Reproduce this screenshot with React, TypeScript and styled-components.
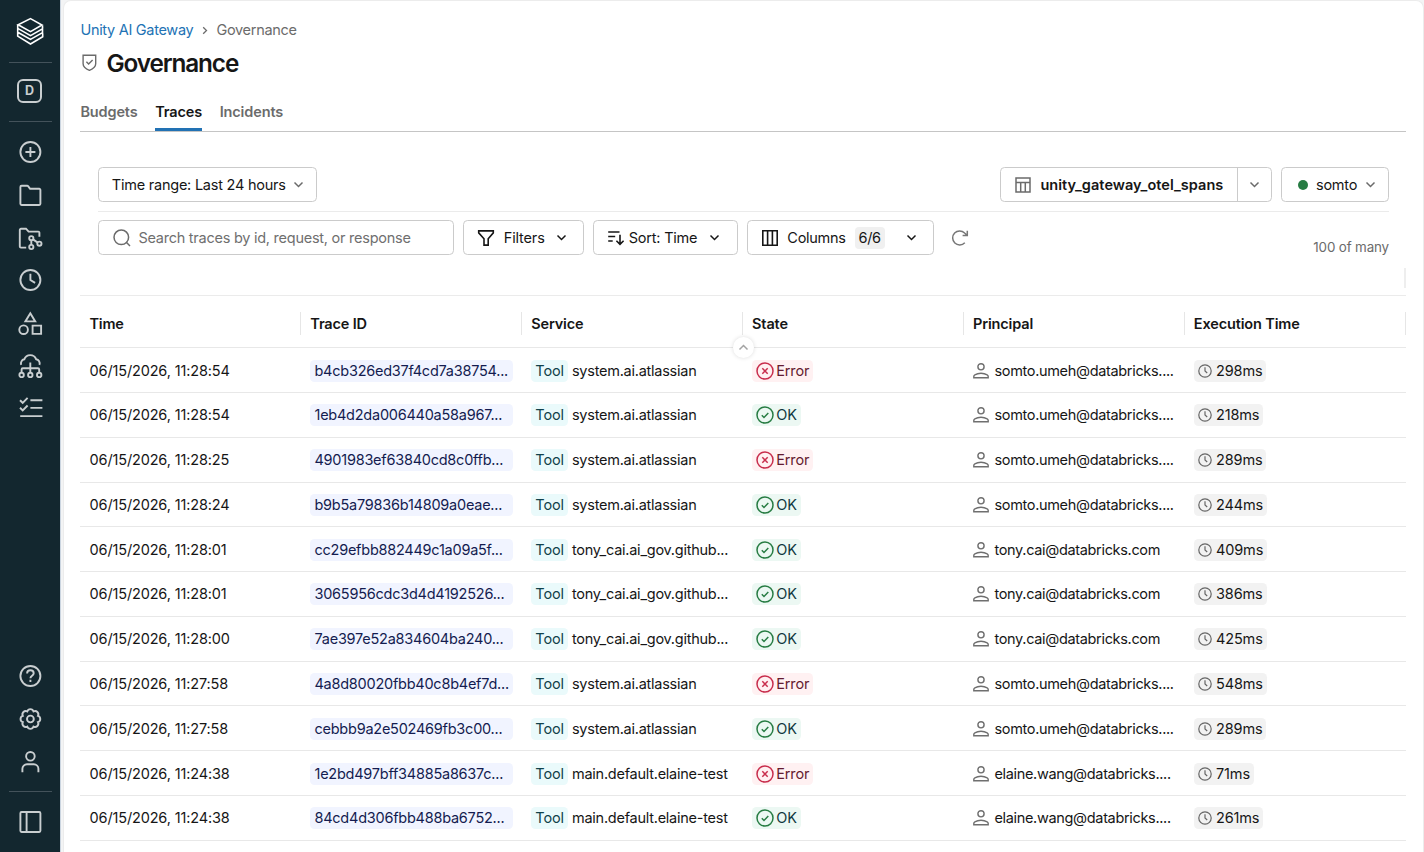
import * as React from 'react';
import styled, { createGlobalStyle } from 'styled-components';

interface Trace {
  time: string;
  id: string;
  service: string;
  ok: boolean;
  principal: string;
  duration: string;
}

const traces: Array<Trace> = [
  { time: '06/15/2026, 11:28:54', id: 'b4cb326ed37f4cd7a38754...', service: 'system.ai.atlassian', ok: false, principal: 'somto.umeh@databricks....', duration: '298ms' },
  { time: '06/15/2026, 11:28:54', id: '1eb4d2da006440a58a967...', service: 'system.ai.atlassian', ok: true, principal: 'somto.umeh@databricks....', duration: '218ms' },
  { time: '06/15/2026, 11:28:25', id: '4901983ef63840cd8c0ffb...', service: 'system.ai.atlassian', ok: false, principal: 'somto.umeh@databricks....', duration: '289ms' },
  { time: '06/15/2026, 11:28:24', id: 'b9b5a79836b14809a0eae...', service: 'system.ai.atlassian', ok: true, principal: 'somto.umeh@databricks....', duration: '244ms' },
  { time: '06/15/2026, 11:28:01', id: 'cc29efbb882449c1a09a5f...', service: 'tony_cai.ai_gov.github...', ok: true, principal: 'tony.cai@databricks.com', duration: '409ms' },
  { time: '06/15/2026, 11:28:01', id: '3065956cdc3d4d4192526...', service: 'tony_cai.ai_gov.github...', ok: true, principal: 'tony.cai@databricks.com', duration: '386ms' },
  { time: '06/15/2026, 11:28:00', id: '7ae397e52a834604ba240...', service: 'tony_cai.ai_gov.github...', ok: true, principal: 'tony.cai@databricks.com', duration: '425ms' },
  { time: '06/15/2026, 11:27:58', id: '4a8d80020fbb40c8b4ef7d...', service: 'system.ai.atlassian', ok: false, principal: 'somto.umeh@databricks....', duration: '548ms' },
  { time: '06/15/2026, 11:27:58', id: 'cebbb9a2e502469fb3c00...', service: 'system.ai.atlassian', ok: true, principal: 'somto.umeh@databricks....', duration: '289ms' },
  { time: '06/15/2026, 11:24:38', id: '1e2bd497bff34885a8637c...', service: 'main.default.elaine-test', ok: false, principal: 'elaine.wang@databricks....', duration: '71ms' },
  { time: '06/15/2026, 11:24:38', id: '84cd4d306fbb488ba6752...', service: 'main.default.elaine-test', ok: true, principal: 'elaine.wang@databricks....', duration: '261ms' },
];

const columns = ['Time', 'Trace ID', 'Service', 'State', 'Principal', 'Execution Time'];

const GlobalStyle = createGlobalStyle`
  * { box-sizing: border-box; }
  body {
    margin: 0;
    overflow: hidden;
    background: #f3f4f5;
    color: #161616;
    font-family: Inter, 'Liberation Sans', sans-serif;
    font-size: 14.5px;
    line-height: 20px;
    letter-spacing: -0.15px;
  }
  button { font: inherit; color: inherit; letter-spacing: inherit; }
  svg { display: block; flex: none; }
`;

const Layout = styled.div`
  display: flex;
  height: 852px;
`;

const Sidebar = styled.nav`
  flex: none;
  display: flex;
  flex-direction: column;
  align-items: center;
  width: 61px;
  background: #13272f;
  border-right: 1px solid #cbd5e0;
  color: #c9ced0;
`;

const SideSlot = styled.div<{ $height?: number }>`
  flex: none;
  display: flex;
  align-items: center;
  justify-content: center;
  width: 100%;
  height: ${(p) => p.$height || 42.7}px;
`;

const SideDivider = styled.div`
  flex: none;
  width: 43px;
  height: 1px;
  margin-left: 1px;
  background: #43525a;
`;

const SideSpacer = styled.div`
  flex: 1;
`;

const Workspace = styled.div`
  display: flex;
  align-items: center;
  justify-content: center;
  width: 25px;
  height: 24px;
  margin-right: 1px;
  margin-bottom: 3px;
  border: 2px solid #c9ced0;
  border-radius: 6px;
  font-size: 12.5px;
  font-weight: 700;
`;

const Page = styled.main`
  flex: 1;
  min-width: 0;
  margin: 0 0 0 2px;
  padding: 19px 17px 0 16.4px;
  background: #fff;
  border: 1px solid #ececec;
  border-bottom: none;
  border-radius: 8px 8px 0 0;
  overflow: hidden;
`;

const Breadcrumb = styled.div`
  display: flex;
  align-items: center;
  height: 20px;
  color: #6b6b6b;
  letter-spacing: -0.3px;
`;

const Crumb = styled.a`
  color: #2272b4;
`;

const CrumbArrow = styled.svg`
  margin: 1px 8px 0 9px;
`;

const TitleRow = styled.div`
  display: flex;
  align-items: center;
  gap: 9px;
  height: 32px;
  margin-top: 7px;
  padding-left: 1px;
`;

const Title = styled.h1`
  margin: 0;
  font-size: 24.3px;
  line-height: 32px;
  font-weight: 600;
  letter-spacing: -1.1px;
`;

const Tabs = styled.div`
  display: flex;
  gap: 17.6px;
  height: 40px;
  margin-top: 13px;
  border-bottom: 1px solid #c5c5c5;
`;

const Tab = styled.div<{ $active?: boolean }>`
  height: 39px;
  padding-top: 10px;
  font-weight: 600;
  letter-spacing: -0.13px;
  color: ${(p) => (p.$active ? '#161616' : '#6b6b6b')};
  border-bottom: ${(p) => (p.$active ? '3px solid #2272b4' : 'none')};
`;

const Toolbar = styled.div`
  display: flex;
  align-items: center;
  margin: 35px 17px 0 17.4px;
  padding-bottom: 9px;
  border-bottom: 1px solid #ebebeb;
`;

const FilterBar = styled.div`
  display: flex;
  align-items: flex-start;
  height: 56.6px;
  margin: 8.4px 17px 0 17.4px;
`;

const Button = styled.button<{ $width: number; $last?: boolean }>`
  flex: none;
  display: flex;
  align-items: center;
  width: ${(p) => p.$width}px;
  height: 35px;
  margin: 0 ${(p) => (p.$last ? 0 : 9)}px 0 0;
  padding: 0 0 0 13px;
  background: #fff;
  border: 1px solid #cbcbcb;
  border-radius: 4.5px;
  white-space: nowrap;
`;

const Label = styled.span<{ $left?: number; $right?: number; $spacing?: number }>`
  margin-left: ${(p) => p.$left || 0}px;
  margin-right: ${(p) => p.$right || 0}px;
  letter-spacing: ${(p) => (p.$spacing === undefined ? 'inherit' : `${p.$spacing}px`)};
`;

const TableName = styled(Label)`
  font-weight: 600;
`;

const SplitButton = styled.div`
  display: flex;
  width: 272px;
  height: 35px;
  margin: 0 9px 0 auto;
  border: 1px solid #cbcbcb;
  border-radius: 4.5px;
`;

const SplitMain = styled.div`
  flex: 1;
  display: flex;
  align-items: center;
  padding-left: 14px;
`;

const SplitArrow = styled.div`
  display: flex;
  align-items: center;
  justify-content: center;
  width: 34px;
  border-left: 1px solid #cbcbcb;
`;

const StatusDot = styled.span`
  width: 10px;
  height: 10px;
  margin: 0 8px 0 3px;
  border-radius: 50%;
  background: #277c43;
`;

const SearchField = styled.div`
  display: flex;
  align-items: center;
  width: 356.4px;
  height: 35px;
  margin-right: 8.6px;
  padding-left: 14px;
  border: 1px solid #cbcbcb;
  border-radius: 4.5px;
  color: #6f6f6f;
`;

const CountBadge = styled.span`
  margin-left: 9px;
  padding: 1px 4px;
  background: #f0f0f0;
  border-radius: 4px;
  letter-spacing: -0.4px;
`;

const Refresh = styled.div`
  margin: 9px 0 0 8px;
`;

const ResultCount = styled.div`
  margin: 17px 0 0 auto;
  color: #6b6b6b;
  font-size: 13.4px;
`;

const ScrollGutter = styled.div`
  height: 20px;
  margin-left: auto;
  margin-top: -9px;
  width: 2px;
  background: #eeeeee;
`;

const Table = styled.div`
  position: relative;
  margin-top: 7px;
  border-top: 1px solid #ebebeb;
`;

const TableRow = styled.div`
  display: grid;
  grid-template-columns: repeat(6, 220.9px);
  align-items: center;
  height: 44.78px;
  border-bottom: 1px solid #e8e8e8;
`;

const TableHead = styled(TableRow)`
  height: 52.3px;
  align-items: start;
  padding-top: 16px;
`;

const HeadCell = styled.div`
  height: 23px;
  padding: 2px 0 0 9px;
  border-right: 1px solid #e6e6e6;
  font-weight: 600;
`;

const Cell = styled.div`
  display: flex;
  align-items: center;
  min-width: 0;
  padding: 1px 0 0 9.2px;
  white-space: nowrap;
`;

const CollapseHandle = styled.div`
  position: absolute;
  left: 652.6px;
  top: 41px;
  display: flex;
  align-items: center;
  justify-content: center;
  width: 21px;
  height: 21px;
  border-radius: 50%;
  background: #fff;
  box-shadow: 0 0 4px rgba(0, 0, 0, 0.14);
`;

const tones = {
  indigo: ['#f1f4ff', '#141c50'],
  teal: ['#eafafb', '#11424b'],
  red: ['#fff1f2', '#641b30'],
  green: ['#ecf8f3', '#12383f'],
  gray: ['#f2f2f2', '#161616'],
};

const Tag = styled.span<{ $tone: keyof typeof tones; $width?: number }>`
  display: inline-flex;
  align-items: center;
  width: ${(p) => (p.$width ? `${p.$width}px` : 'auto')};
  height: 22px;
  padding: 0 4px;
  border-radius: 4.5px;
  background: ${(p) => tones[p.$tone][0]};
  color: ${(p) => tones[p.$tone][1]};
`;

const Chevron = ({ color = '#6b6b6b', up = false, size = 11 }: { color?: string; up?: boolean; size?: number }) => (
  <svg width={size} height={size} viewBox="0 0 11 11" fill="none" stroke={color} strokeWidth="1.5">
    <path d={up ? 'M1.5 7.5l4-4 4 4' : 'M1.5 3.5l4 4 4-4'} />
  </svg>
);

const SideIcon = ({ children }: { children: React.ReactNode }) => (
  <svg width="24" height="24" viewBox="-0.4 0 24 24" overflow="visible" fill="none" stroke="currentColor" strokeWidth="1.9">
    {children}
  </svg>
);

const gearPoint = (i: number) => {
  const a = ((22.5 + 45 * i) * Math.PI) / 180;
  return `${(12 + 8.2 * Math.cos(a)).toFixed(2)} ${(12 + 8.2 * Math.sin(a)).toFixed(2)}`;
};
const gearPath = `M${gearPoint(0)}` + [1, 2, 3, 4, 5, 6, 7, 8].map((i) => `A3.3 3.3 0 0 1 ${gearPoint(i)}`).join('') + 'Z';

const Logo = () => (
  <svg width="28" height="29" viewBox="-0.5 0 28 29" overflow="visible" fill="none" stroke="#fff" strokeWidth="1.6" strokeLinejoin="miter">
    <path d="M14 1.6L25.5 8 14 14.6 1.6 7.7z" />
    <path d="M1.2 7.8v3.6L14 18.7l12-6.8v3.7l-12 6.8L1.2 15.2v3.9L14 27l12.2-7.3v-3.5M1.2 11.6v3.6M26 8.6v3.2" />
  </svg>
);

const ClockIcon = () => (
  <svg width="14" height="14" viewBox="0 0 14 14" fill="none" stroke="#666" strokeWidth="1.2">
    <circle cx="7" cy="7" r="6.2" />
    <path d="M7 3.3V7l2.2 2" />
  </svg>
);

const PersonIcon = () => (
  <svg width="16" height="16" viewBox="0 0 16 16" fill="none" stroke="#6f6f6f" strokeWidth="1.4">
    <circle cx="8" cy="3.8" r="3.1" />
    <path d="M.8 14.8v-1.3c0-.7.4-1.3 1-1.6C3.5 10.9 5.7 10.3 8 10.3s4.5.6 6.2 1.6c.6.3 1 .9 1 1.6v1.3z" />
  </svg>
);

const StateIcon = ({ ok }: { ok: boolean }) => (
  <svg width="18" height="18" viewBox="0 0 18 18" fill="none" stroke={ok ? '#277c43' : '#c82d4c'} strokeWidth="1.5">
    <circle cx="9" cy="9" r="8" />
    {ok ? <path d="M5.8 9.3l2.2 2.2 4.3-4.4" /> : <path d="M6.3 6.3l5.4 5.4M11.7 6.3l-5.4 5.4" />}
  </svg>
);

const SideNav = () => (
  <Sidebar>
    <SideSlot $height={62}><Logo /></SideSlot>
    <SideDivider />
    <SideSlot $height={58}><Workspace>D</Workspace></SideSlot>
    <SideDivider />
    <SideSlot $height={9} />
    <SideSlot><SideIcon><circle cx="12" cy="12" r="10" /><path d="M12 7v10M7 12h10" /></SideIcon></SideSlot>
    <SideSlot><SideIcon><path d="M2 4a1.2 1.2 0 0 1 1.2-1.2h5.6c.4 0 .7.1.9.4l2 2.6h9.1A1.2 1.2 0 0 1 22 7v13.8a1.2 1.2 0 0 1-1.2 1.2H3.2A1.2 1.2 0 0 1 2 20.8z" /></SideIcon></SideSlot>
    <SideSlot>
      <SideIcon>
        <path d="M7.8 21.6H2.6a1.2 1.2 0 0 1-1.2-1.2V3.9a1.2 1.2 0 0 1 1.2-1.2h5l2.6 2.9h9.6A1.2 1.2 0 0 1 21 6.8v4" />
        <circle cx="12.9" cy="12.2" r="2.1" /><circle cx="12.9" cy="21" r="2.1" /><circle cx="21" cy="17.7" r="2.1" />
        <path d="M12.9 14.2V19M14.6 13.4l4.7 3.2" />
      </SideIcon>
    </SideSlot>
    <SideSlot><SideIcon><circle cx="12" cy="12" r="10" /><path d="M12 5.8v6.2l4.7 2.9" /></SideIcon></SideSlot>
    <SideSlot><SideIcon><path d="M11.9 2.3l4.9 8.1H7z" /><circle cx="5.2" cy="18.7" r="4.3" /><path d="M14.2 14.6h8.5v8.3h-8.5z" /></SideIcon></SideSlot>
    <SideSlot>
      <SideIcon>
        <path d="M2.8 10.9A4.2 4.2 0 0 1 5.9 5.3 6.3 6.3 0 0 1 17.7 5.2a4.2 4.2 0 0 1 3.3 5.7M11.9 8.5v10M3.2 18.6v-3.2c0-.7.5-1.2 1.2-1.2h15.2c.7 0 1.2.5 1.2 1.2v3.2" />
        <circle cx="3.2" cy="20.9" r="2.2" /><circle cx="11.9" cy="20.9" r="2.2" /><circle cx="20.8" cy="20.9" r="2.2" />
      </SideIcon>
    </SideSlot>
    <SideSlot><SideIcon><path d="M1.6 4.2l2.7 2.6 4.9-4.9M1.6 11.8l2.7 2.6 4.9-4.9M12 4.3h12M12 11.9h12M1.8 20.1H24" /></SideIcon></SideSlot>
    <SideSpacer />
    <SideSlot><SideIcon><circle cx="12" cy="12" r="10" /><path d="M8.7 9.5c0-2 1.4-3.2 3.3-3.2s3.3 1.2 3.3 3c0 2.5-3.3 2.5-3.3 5M12 15.8v2.2" /></SideIcon></SideSlot>
    <SideSlot><SideIcon><path d={gearPath} /><circle cx="12" cy="12" r="3.4" /></SideIcon></SideSlot>
    <SideSlot><SideIcon><circle cx="12" cy="6.3" r="4.3" /><path d="M4 22.2v-3.4A4.6 4.6 0 0 1 8.6 14.2h6.8a4.6 4.6 0 0 1 4.6 4.6v3.4" /></SideIcon></SideSlot>
    <SideSlot $height={8} />
    <SideDivider />
    <SideSlot $height={60}><SideIcon><rect x="2" y="2" width="20" height="20" rx="1.2" /><path d="M8.2 2v20" /></SideIcon></SideSlot>
  </Sidebar>
);

const TopToolbar = () => (
  <Toolbar>
    <Button $width={219}>
      <Label $right={7} $spacing={-0.23}>Time range: Last 24 hours</Label>
      <Chevron />
    </Button>
    <SplitButton>
      <SplitMain>
        <svg width="16" height="16" viewBox="0 0 16 16" fill="none" stroke="#6b6b6b" strokeWidth="1.5">
          <path d="M1 1h14v14H1zM1 5.5h14M5.7 5.5V15M10.3 5.5V15" />
        </svg>
        <TableName $left={9.4} $spacing={0.05}>unity_gateway_otel_spans</TableName>
      </SplitMain>
      <SplitArrow><Chevron /></SplitArrow>
    </SplitButton>
    <Button $width={108} $last>
      <StatusDot />
      <Label $right={7.4} $spacing={-0.25}>somto</Label>
      <Chevron />
    </Button>
  </Toolbar>
);

const TraceFilters = () => (
  <FilterBar>
    <SearchField>
      <svg width="18" height="18" viewBox="0 0 18 18" fill="none" stroke="#6b6b6b" strokeWidth="1.5">
        <circle cx="8.3" cy="8.3" r="7.3" />
        <path d="M13.3 13.3l3.7 3.7" />
      </svg>
      <Label $left={7.6} $spacing={-0.25}>Search traces by id, request, or response</Label>
    </SearchField>
    <Button $width={121}>
      <svg width="18" height="18" viewBox="0 0 18 18" fill="none" stroke="#161616" strokeWidth="1.6">
        <path d="M1.7 1.9h14.6v2l-5.1 5.8v6.4H7V9.7L1.7 3.9z" />
      </svg>
      <Label $left={9} $right={11.6}>Filters</Label>
      <Chevron color="#161616" />
    </Button>
    <Button $width={145}>
      <svg width="18" height="18" viewBox="0 0 18 18" fill="none" stroke="#161616" strokeWidth="1.6">
        <path d="M1.2 3h11.3M1.2 7.5h7M1.2 12h4.5M13 5.8v9.4M9.4 11.7l3.6 3.6 3.6-3.6" />
      </svg>
      <Label $left={4} $right={12} $spacing={-0.22}>Sort: Time</Label>
      <Chevron color="#161616" />
    </Button>
    <Button $width={187}>
      <svg width="18" height="18" viewBox="0 0 18 18" fill="none" stroke="#161616" strokeWidth="1.6">
        <path d="M1.8 1.8h14.4v14.4H1.8zM6.6 1.8v14.4M11.4 1.8v14.4" />
      </svg>
      <Label $left={8.6} $spacing={-0.3}>Columns</Label>
      <CountBadge>6/6</CountBadge>
      <Label $left={21} />
      <Chevron color="#161616" />
    </Button>
    <Refresh>
      <svg width="18" height="18" viewBox="0 0 18 18" fill="none" stroke="#777" strokeWidth="1.5">
        <path d="M13.8 13.7a7 7 0 1 1-.2-9.7L16 6.200M16.3 1.8v4.7h-4.7" />
      </svg>
    </Refresh>
    <ResultCount>100 of many</ResultCount>
  </FilterBar>
);

const TracesTable = () => (
  <Table>
    <TableHead>
      {columns.map((name) => (
        <HeadCell key={name}>{name}</HeadCell>
      ))}
    </TableHead>
    {traces.map((trace, index) => (
      <TableRow key={index}>
        <Cell>{trace.time}</Cell>
        <Cell>
          <Tag $tone="indigo" $width={203}>
            <Label $spacing={-0.24}>{trace.id}</Label>
          </Tag>
        </Cell>
        <Cell>
          <Tag $tone="teal" $width={36.6}>Tool</Tag>
          <Label $left={4} $spacing={-0.25}>{trace.service}</Label>
        </Cell>
        <Cell>
          <Tag $tone={trace.ok ? 'green' : 'red'}>
            <StateIcon ok={trace.ok} />
            <Label $left={2}>{trace.ok ? 'OK' : 'Error'}</Label>
          </Tag>
        </Cell>
        <Cell>
          <PersonIcon />
          <Label $left={5.3} $spacing={-0.33}>{trace.principal}</Label>
        </Cell>
        <Cell>
          <Tag $tone="gray">
            <ClockIcon />
            <Label $left={4}>{trace.duration}</Label>
          </Tag>
        </Cell>
      </TableRow>
    ))}
    <CollapseHandle><Chevron up color="#a3a3a3" /></CollapseHandle>
  </Table>
);

const App = () => (
  <Layout>
    <GlobalStyle />
    <SideNav />
    <Page>
      <Breadcrumb>
        <Crumb>Unity AI Gateway</Crumb>
        <CrumbArrow width="6" height="9" viewBox="0 0 6 9" fill="none" stroke="#6b6b6b" strokeWidth="1.3">
          <path d="M1.2 1.2l3.3 3.3-3.3 3.3" />
        </CrumbArrow>
        <span>Governance</span>
      </Breadcrumb>
      <TitleRow>
        <svg width="16" height="18" viewBox="-0.4 0 16 18" fill="none" stroke="#6b6b6b" strokeWidth="1.4">
          <path d="M1.7 1.2h12.6v8.5c0 3.100-3 5.300-6.300 6.600-3.300-1.300-6.300-3.500-6.300-6.600z" />
          <path d="M5 7.7l2.2 2.2 4-4" />
        </svg>
        <Title>Governance</Title>
      </TitleRow>
      <Tabs>
        <Tab>Budgets</Tab>
        <Tab $active>Traces</Tab>
        <Tab>Incidents</Tab>
      </Tabs>
      <TopToolbar />
      <TraceFilters />
      <ScrollGutter />
      <TracesTable />
    </Page>
  </Layout>
);

export default App;
